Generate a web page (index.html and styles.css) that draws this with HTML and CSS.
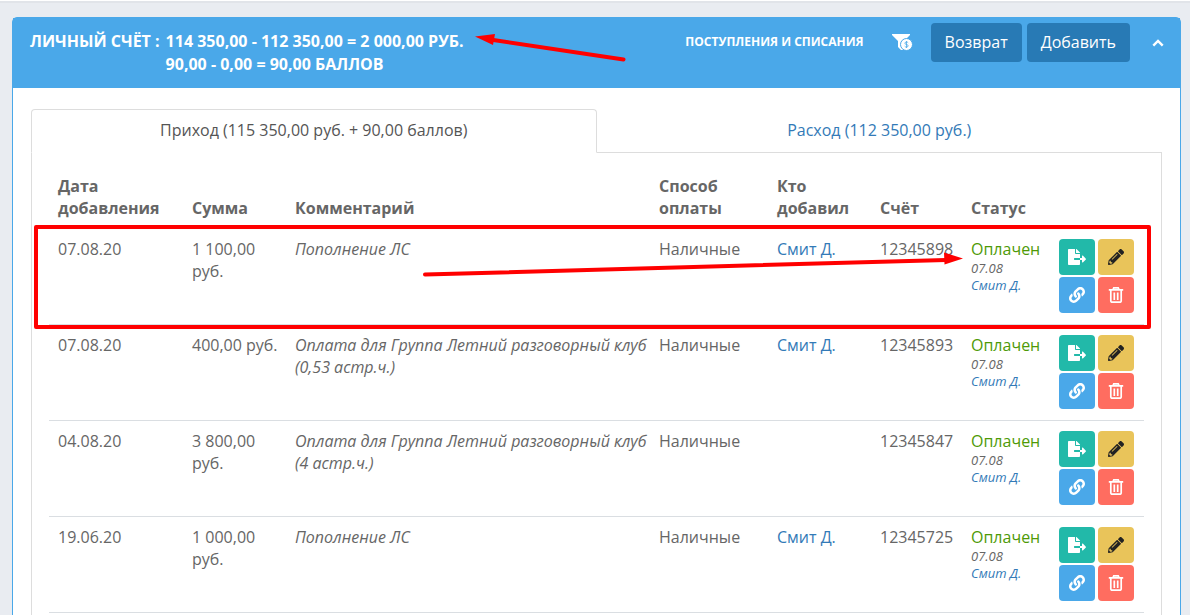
FILE: index.html
```
<!DOCTYPE html>
<html lang="ru">
<head>
    <meta charset="UTF-8">
    <meta name="viewport" content="width=device-width,initial-scale=1.0">
    <title>Личный счёт</title>
    <link rel="stylesheet" href="styles.css">
</head>
<body>
    <svg class="sprite" aria-hidden="true">
        <symbol id="i-export" viewBox="0 0 576 512">
            <path d="M384 121.9c0-6.3-2.5-12.4-7-16.9L279.1 7c-4.500-4.500-10.600-7-17-7H256v128h128zM571 308l-95.700-96.400c-10.100-10.100-27.400-3-27.400 11.300V288h-64v64h64v65.200c0 14.300 17.300 21.400 27.400 11.300L571 332c6.600-6.600 6.600-17.400 0-24zm-379 28v-32c0-8.800 7.200-16 16-16h176V160H248c-13.200 0-24-10.800-24-24V0H24C10.700 0 0 10.700 0 24v464c0 13.300 10.700 24 24 24h336c13.300 0 24-10.700 24-24V352H208c-8.800 0-16-7.200-16-16z"/>
        </symbol>
        <symbol id="i-pencil" viewBox="0 0 512 512">
            <path d="M497.9 142.1l-46.1 46.1c-4.7 4.7-12.3 4.7-17 0l-111-111c-4.7-4.7-4.7-12.3 0-17l46.1-46.1c18.7-18.7 49.1-18.7 67.9 0l60.1 60.1c18.8 18.7 18.8 49.1 0 67.9zM284.2 99.8L21.6 362.4.4 483.9c-2.9 16.4 11.4 30.6 27.8 27.8l121.5-21.3 262.6-262.6c4.7-4.7 4.7-12.3 0-17l-111-111c-4.8-4.7-12.4-4.7-17.1 0zM124.1 339.9c-5.5-5.5-5.5-14.3 0-19.8l154-154c5.5-5.5 14.3-5.5 19.8 0s5.5 14.3 0 19.8l-154 154c-5.5 5.5-14.3 5.5-19.8 0zM88 424h48v36.3l-64.5 11.3-31.1-31.1L51.7 376H88v48z"/>
        </symbol>
        <symbol id="i-link" viewBox="0 0 512 512">
            <path d="M326.612 185.391c59.747 59.809 58.927 155.698.36 214.59-.11.12-.24.25-.36.37l-67.2 67.2c-59.27 59.27-155.699 59.262-214.96 0-59.27-59.26-59.27-155.7 0-214.96l37.106-37.106c9.84-9.84 26.786-3.3 27.294 10.606.648 17.722 3.826 35.527 9.69 52.721 1.986 5.822.567 12.262-3.783 16.612l-13.087 13.087c-28.026 28.026-28.905 73.66-1.155 101.96 28.024 28.579 74.086 28.749 102.325.51l67.2-67.19c28.191-28.191 28.073-73.757 0-101.83-3.701-3.694-7.429-6.564-10.341-8.569a16.037 16.037 0 0 1-6.947-12.606c-.396-10.567 3.348-21.456 11.698-29.806l21.054-21.055c5.521-5.521 14.182-6.199 20.584-1.731a152.482 152.482 0 0 1 20.522 17.197zM467.547 44.449c-59.261-59.262-155.69-59.27-214.96 0l-67.2 67.2c-.12.12-.25.25-.36.37-58.566 58.892-59.387 154.781.36 214.59a152.454 152.454 0 0 0 20.521 17.196c6.402 4.468 15.064 3.789 20.584-1.731l21.054-21.055c8.35-8.35 12.094-19.239 11.698-29.806a16.037 16.037 0 0 0-6.947-12.606c-2.912-2.005-6.64-4.875-10.341-8.569-28.073-28.073-28.191-73.639 0-101.83l67.2-67.19c28.239-28.239 74.3-28.069 102.325.51 27.75 28.3 26.872 73.934-1.155 101.96l-13.087 13.087c-4.35 4.35-5.769 10.79-3.783 16.612 5.864 17.194 9.042 34.999 9.69 52.721.509 13.906 17.454 20.446 27.294 10.606l37.106-37.106c59.271-59.259 59.271-155.699.001-214.959z"/>
        </symbol>
        <symbol id="i-trash" viewBox="0 0 16 16">
            <path fill="none" stroke="currentColor" stroke-width="1.700" d="M.8 2.900h14.400M5 2.500l.8-1.700h4.400l.8 1.700M2.800 3v11q0 1.200 1.200 1.200h8q1.200 0 1.200-1.200V3M6.300 5.500v7.500M9.700 5.500v7.500"/>
        </symbol>
    </svg>

    <main class="page">
        <section class="panel">
            <header class="panel-head">
                <h1 class="account">
                    <span>Личный счёт :</span>
                    <span>114 350,00 - 112 350,00 = 2 000,00 руб.<br>90,00 - 0,00 = 90,00 баллов</span>
                </h1>
                <div class="tools">
                    <a class="ledger" href="#">Поступления и списания</a>
                    <button class="plain filter" type="button" aria-label="Фильтр">
                        <svg width="21" height="17" viewBox="0 0 21 17">
                            <path fill="#fff" d="M0 0h18v1l-6 6v9H9l-3-3V7L0 1z"/>
                            <circle cx="14.500" cy="10.500" r="6" fill="#fff" stroke="#4aa8e9" stroke-width="1"/>
                            <path fill="none" stroke="#4aa8e9" stroke-width=".8" d="M16.200 8.800q-.6-.8-1.700-.8-1.600 0-1.600 1.200t1.600 1.300 1.600 1.300-1.600 1.300q-1.200 0-1.800-.9M14.500 7v7"/>
                        </svg>
                    </button>
                    <div class="btns">
                        <button class="btn" type="button">Возврат</button>
                        <button class="btn" type="button">Добавить</button>
                    </div>
                    <button class="plain collapse" type="button" aria-label="Свернуть">
                        <svg width="12" height="8" viewBox="0 0 12 8"><path fill="none" stroke="#fff" stroke-width="2.400" d="M1.300 6.700L6 2l4.700 4.700"/></svg>
                    </button>
                </div>
            </header>

            <div class="panel-body">
                <nav class="tabs">
                    <a class="tab active" href="#income">Приход (115 350,00 руб. + 90,00 баллов)</a>
                    <a class="tab" href="#expense">Расход (112 350,00 руб.)</a>
                </nav>
                <div class="tab-content" id="income">
                    <table class="payments">
                        <colgroup>
                            <col class="c-date"><col class="c-sum"><col class="c-comment"><col class="c-method">
                            <col class="c-author"><col class="c-bill"><col class="c-status"><col class="c-actions">
                        </colgroup>
                        <thead>
                            <tr>
                                <th>Дата добавления</th>
                                <th>Сумма</th>
                                <th>Комментарий</th>
                                <th>Способ оплаты</th>
                                <th>Кто добавил</th>
                                <th>Счёт</th>
                                <th>Статус</th>
                                <td></td>
                            </tr>
                        </thead>
                        <tbody>
                            <tr>
                                <td>07.08.20</td>
                                <td>1 100,00 руб.</td>
                                <td class="comment">Пополнение ЛС</td>
                                <td>Наличные</td>
                                <td><a href="#">Смит Д.</a></td>
                                <td>12345898</td>
                                <td><span class="paid">Оплачен</span><small>07.08<br><a href="#">Смит Д.</a></small></td>
                                <td>
                                    <div class="actions">
                                        <button class="act export" type="button" aria-label="Выгрузить"><svg width="18" height="16"><use href="#i-export"/></svg></button>
                                        <button class="act edit" type="button" aria-label="Изменить"><svg width="16" height="16"><use href="#i-pencil"/></svg></button>
                                        <button class="act link" type="button" aria-label="Ссылка"><svg width="16" height="16"><use href="#i-link"/></svg></button>
                                        <button class="act del" type="button" aria-label="Удалить"><svg width="16" height="16"><use href="#i-trash"/></svg></button>
                                    </div>
                                </td>
                            </tr>
                            <tr>
                                <td>07.08.20</td>
                                <td>400,00 руб.</td>
                                <td class="comment">Оплата для Группа Летний разговорный клуб (0,53 астр.ч.)</td>
                                <td>Наличные</td>
                                <td><a href="#">Смит Д.</a></td>
                                <td>12345893</td>
                                <td><span class="paid">Оплачен</span><small>07.08<br><a href="#">Смит Д.</a></small></td>
                                <td>
                                    <div class="actions">
                                        <button class="act export" type="button" aria-label="Выгрузить"><svg width="18" height="16"><use href="#i-export"/></svg></button>
                                        <button class="act edit" type="button" aria-label="Изменить"><svg width="16" height="16"><use href="#i-pencil"/></svg></button>
                                        <button class="act link" type="button" aria-label="Ссылка"><svg width="16" height="16"><use href="#i-link"/></svg></button>
                                        <button class="act del" type="button" aria-label="Удалить"><svg width="16" height="16"><use href="#i-trash"/></svg></button>
                                    </div>
                                </td>
                            </tr>
                            <tr>
                                <td>04.08.20</td>
                                <td>3 800,00 руб.</td>
                                <td class="comment">Оплата для Группа Летний разговорный клуб (4 астр.ч.)</td>
                                <td>Наличные</td>
                                <td></td>
                                <td>12345847</td>
                                <td><span class="paid">Оплачен</span><small>07.08<br><a href="#">Смит Д.</a></small></td>
                                <td>
                                    <div class="actions">
                                        <button class="act export" type="button" aria-label="Выгрузить"><svg width="18" height="16"><use href="#i-export"/></svg></button>
                                        <button class="act edit" type="button" aria-label="Изменить"><svg width="16" height="16"><use href="#i-pencil"/></svg></button>
                                        <button class="act link" type="button" aria-label="Ссылка"><svg width="16" height="16"><use href="#i-link"/></svg></button>
                                        <button class="act del" type="button" aria-label="Удалить"><svg width="16" height="16"><use href="#i-trash"/></svg></button>
                                    </div>
                                </td>
                            </tr>
                            <tr>
                                <td>19.06.20</td>
                                <td>1 000,00 руб.</td>
                                <td class="comment">Пополнение ЛС</td>
                                <td>Наличные</td>
                                <td><a href="#">Смит Д.</a></td>
                                <td>12345725</td>
                                <td><span class="paid">Оплачен</span><small>07.08<br><a href="#">Смит Д.</a></small></td>
                                <td>
                                    <div class="actions">
                                        <button class="act export" type="button" aria-label="Выгрузить"><svg width="18" height="16"><use href="#i-export"/></svg></button>
                                        <button class="act edit" type="button" aria-label="Изменить"><svg width="16" height="16"><use href="#i-pencil"/></svg></button>
                                        <button class="act link" type="button" aria-label="Ссылка"><svg width="16" height="16"><use href="#i-link"/></svg></button>
                                        <button class="act del" type="button" aria-label="Удалить"><svg width="16" height="16"><use href="#i-trash"/></svg></button>
                                    </div>
                                </td>
                            </tr>
                        </tbody>
                    </table>
                </div>
            </div>
        </section>

        <!-- red marks over the account total and the first payment -->
        <div class="mark-row"></div>
        <svg class="marks" width="1190" height="340" viewBox="0 0 1190 340" aria-hidden="true">
            <path stroke="red" stroke-width="4" stroke-linecap="round" d="M623.500 59.500L490 39.500M425 274.500L946 260"/>
            <path fill="red" d="M475 36.500L495 34l-2 11zM963 258.500l-19-6 .5 12z"/>
        </svg>
    </main>
</body>
</html>
```
FILE: styles.css
```
* {
    box-sizing: border-box;
}
body {
    margin: 0;
    height: 100vh;
    overflow: hidden;
    background-color: #e9ecf1;
    border-top: 1px solid #fff;
    color: #666;
    font-family: "Open Sans", "Noto Sans", sans-serif;
    font-size: 16px;
    line-height: 22px;
}
a {
    color: #337ab7;
    text-decoration: none;
}
button {
    font: inherit;
    border: 0;
    padding: 0;
    cursor: pointer;
}
svg {
    display: block;
    fill: currentColor;
}
.sprite {
    position: absolute;
    width: 0;
    height: 0;
}
.page {
    position: relative;
    border-top: 2px solid #e1e4e9;
    padding: 14px 9px 0 12px;
}

/* panel */
.panel {
    border: 1px solid #4aa8e9;
    border-radius: 5px;
    background-color: #fff;
}
.panel-head {
    display: flex;
    justify-content: space-between;
    align-items: flex-start;
    min-height: 70px;
    padding: 5px 16px 0 17px;
    background-color: #4aa8e9;
    color: #fff;
}
.account {
    display: flex;
    gap: 6px;
    margin: 0;
    padding-top: 7px;
    font-size: 16px;
    font-weight: 700;
    line-height: 23px;
    text-transform: uppercase;
}
.tools {
    display: flex;
    align-items: center;
}
.ledger {
    padding-bottom: 2px;
    color: #fff;
    font-size: 12px;
    font-weight: 700;
    text-transform: uppercase;
}
.plain {
    background: none;
    color: #fff;
}
.filter {
    margin: 0 18px 0 28px;
}
.btns {
    display: flex;
    gap: 5px;
}
.btn {
    height: 39px;
    padding: 0 14px 2px;
    border-radius: 4px;
    background-color: #287ab5;
    color: #fff;
}
.collapse {
    margin-left: 22px;
}
.panel-body {
    padding: 21px 18px;
}

/* tabs */
.tabs {
    display: flex;
    border-bottom: 1px solid #ddd;
}
.tab {
    flex: 1;
    margin-bottom: -1px;
    padding: 9px 0 11px;
    border: 1px solid transparent;
    border-radius: 4px 4px 0 0;
    font-weight: 500;
    text-align: center;
}
.tab.active {
    border-color: #ddd;
    border-bottom-color: #fff;
    background-color: #fff;
    color: #555;
}
.tab-content {
    padding: 12px 17px;
    border: 1px solid #ddd;
    border-top: 0;
}

/* payments */
.payments {
    width: 100%;
    table-layout: fixed;
    border-collapse: separate;
    border-spacing: 0;
}
.payments th,
.payments td {
    padding: 9px 3px 11px 9px;
    text-align: left;
    vertical-align: top;
}
.payments th {
    padding-top: 10px;
    padding-bottom: 9px;
    font-weight: 700;
    vertical-align: bottom;
}
.payments tbody td {
    border-top: 1px solid #dadee2;
}
.payments tbody tr:last-child td {
    border-bottom: 1px solid #dadee2;
}
.c-date {
    width: 134px;
}
.c-sum,
.c-author {
    width: 103px;
}
.c-method {
    width: 118px;
}
.c-bill {
    width: 91px;
}
.c-status {
    width: 88px;
}
.c-actions {
    width: 94px;
}
.comment {
    font-style: italic;
}
.paid {
    color: #4e9a06;
}
.payments small {
    display: block;
    font-size: 13px;
    font-style: italic;
    line-height: 17px;
}
.actions {
    display: grid;
    grid-template-columns: 36px 36px;
    gap: 2px 3px;
    padding-top: 1px;
}
.act {
    display: flex;
    align-items: center;
    justify-content: center;
    height: 36px;
    border-radius: 4px;
    color: #fff;
}
.export {
    background-color: #22b9a9;
}
.edit {
    background-color: #e9c45a;
    color: #222;
}
.link {
    background-color: #4aa8e9;
}
.del {
    background-color: #ff6d60;
}

/* marks */
.mark-row {
    position: absolute;
    top: 222px;
    left: 34px;
    right: 39px;
    height: 104px;
    border: 4px solid red;
    border-radius: 2px;
}
.marks {
    position: absolute;
    top: -3px;
    left: 0;
    pointer-events: none;
}
```
